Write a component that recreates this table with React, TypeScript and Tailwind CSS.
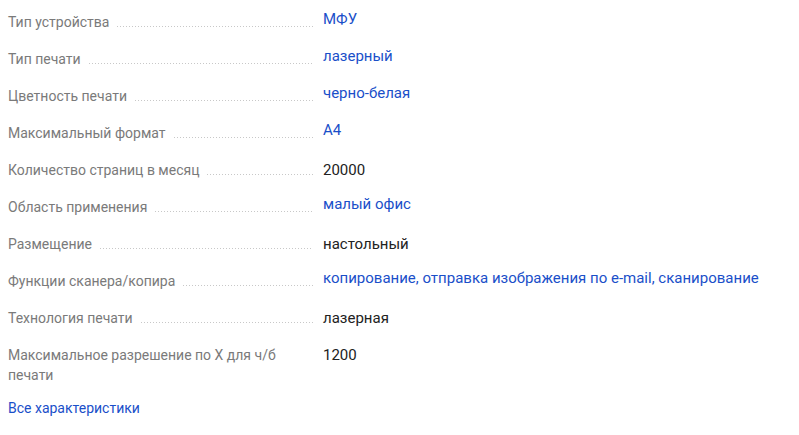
const specs: { label: string; value: string; link: boolean }[] = [
  { label: "Тип устройства", value: "МФУ", link: true },
  { label: "Тип печати", value: "лазерный", link: true },
  { label: "Цветность печати", value: "черно-белая", link: true },
  { label: "Максимальный формат", value: "А4", link: true },
  { label: "Количество страниц в месяц", value: "20000", link: false },
  { label: "Область применения", value: "малый офис", link: true },
  { label: "Размещение", value: "настольный", link: false },
  {
    label: "Функции сканера/копира",
    value: "копирование, отправка изображения по e-mail, сканирование",
    link: true,
  },
  { label: "Технология печати", value: "лазерная", link: false },
  {
    label: "Максимальное разрешение по X для ч/б печати",
    value: "1200",
    link: false,
  },
];

export default function App() {
  return (
    <div className="min-h-[435px] w-[799px] bg-white px-2 pt-[12px] font-['Roboto',sans-serif] text-sm leading-5">
      <div className="flex flex-col gap-[17px]">
        {specs.map((spec, index) => {
          const isLast = index === specs.length - 1;

          return (
            <div key={spec.label} className="flex items-start">
              <div className="flex w-[305px] shrink-0 items-baseline text-[#7a7a7a]">
                <span className={isLast ? "pr-2" : "whitespace-nowrap"}>
                  {spec.label}
                </span>
                {!isLast && (
                  <span className="ml-2 h-px flex-1 self-end mb-[5px] bg-[linear-gradient(to_right,#c8c8c8_1px,transparent_1px)] bg-[length:3px_1px] bg-repeat-x" />
                )}
              </div>
              {/* linked values sit a few px above the label baseline */}
              <div
                className={
                  spec.link
                    ? "-mt-[3px] ml-[10px] text-[15px] leading-5 text-[#1a4fc9]"
                    : "ml-[10px] text-[15px] leading-5 text-[#222222]"
                }
              >
                {spec.value}
              </div>
            </div>
          );
        })}
      </div>
      <a href="#" className="mt-[13px] block w-fit text-[#1a4fc9]">
        Все характеристики
      </a>
    </div>
  );
}
